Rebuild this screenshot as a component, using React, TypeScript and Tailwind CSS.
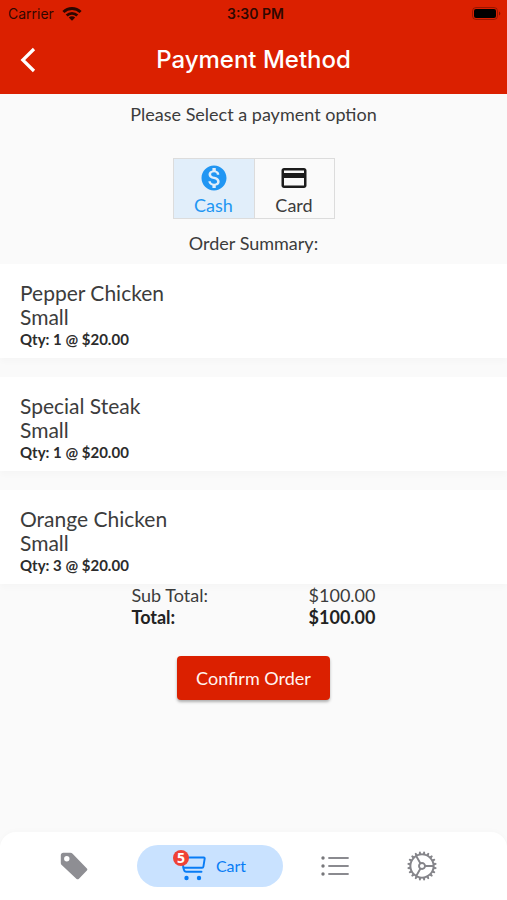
import { useState } from "react";
import { MdMonetizationOn, MdOutlineCreditCard } from "react-icons/md";

const orders = [
  { name: "Pepper Chicken", size: "Small", qty: 1, price: "$20.00" },
  { name: "Special Steak", size: "Small", qty: 1, price: "$20.00" },
  { name: "Orange Chicken", size: "Small", qty: 3, price: "$20.00" },
];

function WifiIcon() {
  return (
    <svg width="20" height="14" viewBox="0 0 20 14" fill="none" stroke="currentColor" strokeWidth="2.9" aria-hidden="true">
      <path d="M1.400 5a12.300 12.300 0 0 1 17.200 0" />
      <path d="M4.700 8.500a7.600 7.600 0 0 1 10.600 0" />
      <path d="M10 13.800 6.800 10.600a4.500 4.500 0 0 1 6.400 0Z" fill="currentColor" stroke="none" />
    </svg>
  );
}

function BatteryIcon() {
  return (
    <svg width="31" height="14" viewBox="0 0 31 14" aria-hidden="true">
      <rect x="0.500" y="0.500" width="25" height="12" rx="3.500" fill="none" stroke="#000" strokeOpacity="0.3" />
      <rect x="2" y="2" width="22" height="9" rx="2" fill="#000" />
      <path d="M27 4.500v4c1.800-.7 1.800-3.300 0-4Z" fill="#000" fillOpacity="0.4" />
    </svg>
  );
}

function TagIcon() {
  return (
    <svg width="28" height="28" viewBox="0 0 28 28" fill="#8e8e93" aria-hidden="true">
      <path
        fillRule="evenodd"
        d="M3.300.800h7c1 0 1.700.300 2.300.900l14.300 14.800c.6.600.6 1.300 0 1.900l-8.200 8.500c-.6.600-1.500.6-2.100 0L1.700 13c-.6-.6-.9-1.300-.9-2.100V3.300c0-1.500 1-2.500 2.500-2.500ZM6.800 4a2.700 2.700 0 1 0 0 5.400 2.700 2.700 0 0 0 0-5.400Z"
      />
    </svg>
  );
}

function CartIcon() {
  return (
    <svg width="32" height="30" viewBox="0 0 32 30" fill="none" stroke="#087cf5" strokeWidth="1.900" strokeLinecap="round" strokeLinejoin="round" aria-hidden="true">
      <path d="M2 2.500h3.200c.8 0 1.300.4 1.500 1.200l3.200 15.100c.3 1.300.8 1.900 2 1.900H27.500" />
      <path d="M7.500 6.500h22.300c.7 0 1 .4.900 1l-1.300 8.200c-.1.700-.6 1.100-1.300 1.100H9.500" />
      <circle cx="12.500" cy="27" r="2.200" fill="#087cf5" stroke="none" />
      <circle cx="25" cy="27" r="2.200" fill="#087cf5" stroke="none" />
    </svg>
  );
}

function ListIcon() {
  return (
    <svg width="28" height="22" viewBox="0 0 28 22" fill="none" stroke="#8a8a8f" strokeWidth="1.800" strokeLinecap="round" aria-hidden="true">
      <path d="M8 3h19M8 11h19M8 19h19" />
      <g fill="#77777b" stroke="none">
        <circle cx="2" cy="3" r="1.700" />
        <circle cx="2" cy="11" r="1.700" />
        <circle cx="2" cy="19" r="1.700" />
      </g>
    </svg>
  );
}

const teeth = Array.from({ length: 20 }, (_, i) => i * 18 + 9);

function GearIcon() {
  return (
    <svg width="30" height="30" viewBox="-15 -15 30 30" fill="none" stroke="#85858a" strokeWidth="1.900" aria-hidden="true">
      <circle r="11.600" />
      <circle r="3" />
      <path d="M3 0H11.600M-1.500 2.600-5.800 10M-1.500-2.600-5.800-10" />
      {teeth.map((angle) => (
        <path key={angle} d="M12-1.400 14.600-.7V.7L12 1.400Z" fill="#85858a" stroke="none" transform={`rotate(${angle})`} />
      ))}
    </svg>
  );
}

export default function App() {
  const [method, setMethod] = useState("cash");
  const option = "flex h-[59px] flex-col items-center justify-end pb-px text-lg leading-6";
  return (
    <div className="flex min-h-screen flex-col bg-[#fafafa] font-['Lato','Noto_Sans',sans-serif] text-[#3c3c3c]">
      <header className="bg-[#db2000] font-['Inter','Liberation_Sans',sans-serif]">
        <div className="grid h-7 grid-cols-3 items-center pr-1 pl-2 text-sm text-black/80">
          <div className="flex items-center gap-2">
            <span>Carrier</span>
            <WifiIcon />
          </div>
          <span className="text-center font-semibold">3:30 PM</span>
          <span className="flex justify-end">
            <BatteryIcon />
          </span>
        </div>
        <div className="grid h-[66px] grid-cols-[56px_1fr_56px] items-center pb-0.5">
          <button type="button" aria-label="Back" className="flex h-full items-center pl-5 text-white">
            <svg width="16" height="26" viewBox="0 0 16 26" fill="none" stroke="currentColor" strokeWidth="3.200" aria-hidden="true">
              <path d="M14 2 2.800 13 14 24" />
            </svg>
          </button>
          <h1 className="text-center text-2xl font-medium text-white">Payment Method</h1>
        </div>
      </header>

      <main className="flex flex-1 flex-col items-center">
        <p className="mt-2 text-lg leading-6">Please Select a payment option</p>

        <div className="mt-8 flex border border-[#dcdcdc]" role="group" aria-label="Payment option">
          <button
            type="button"
            aria-pressed={method === "cash"}
            onClick={() => setMethod("cash")}
            className={`${option} w-[81px] border-r border-[#dcdcdc] ${method === "cash" ? "bg-[#e1eefa] text-[#2196f3]" : "text-[#3c3c3c]"}`}
          >
            <MdMonetizationOn size={30} />
            <span>Cash</span>
          </button>
          <button
            type="button"
            aria-pressed={method === "card"}
            onClick={() => setMethod("card")}
            className={`${option} w-[79px] ${method === "card" ? "bg-[#e1eefa] text-[#2196f3]" : "text-[#3c3c3c]"}`}
          >
            <MdOutlineCreditCard size={30} className={method === "card" ? "" : "text-[#1c1c1c]"} />
            <span>Card</span>
          </button>
        </div>

        <h2 className="mt-3 text-lg leading-6">Order Summary:</h2>

        <ul className="mt-[9px] flex w-full flex-col gap-[19px]">
          {orders.map((o) => (
            <li key={o.name} className="bg-white px-5 pt-[17px] pb-[9px] shadow-[0_4px_6px_rgba(0,0,0,0.02)]">
              <p className="text-[21px] leading-6">{o.name}</p>
              <p className="text-[21px] leading-6">{o.size}</p>
              <p className="text-[15px] leading-5 font-bold text-[#2c2c2c]">
                Qty: {o.qty} @ {o.price}
              </p>
            </li>
          ))}
        </ul>

        <dl className="grid w-[244px] grid-cols-[1fr_auto] text-lg leading-[22px]">
          <dt>Sub Total:</dt>
          <dd>$100.00</dd>
          <dt className="font-bold text-[#222222]">Total:</dt>
          <dd className="font-bold text-[#222222]">$100.00</dd>
        </dl>

        <button type="button" className="mt-7 mb-8 h-11 rounded bg-[#db2000] px-[19px] text-lg text-[#fff4f0] shadow-[0_2px_3px_rgba(0,0,0,0.3)]">
          Confirm Order
        </button>
      </main>

      <nav aria-label="Main" className="flex h-[68px] items-center rounded-t-2xl bg-white pr-[42px] pl-[30px] shadow-[0_-1px_6px_rgba(0,0,0,0.02)]">
        <button type="button" aria-label="Deals" className="flex flex-1 justify-center">
          <TagIcon />
        </button>
        <button
          type="button"
          aria-current="page"
          className="mr-2 ml-5 flex h-[42px] w-[146px] items-center justify-center gap-[10px] rounded-full bg-[#c9e2ff] text-base text-[#087cf5]"
        >
          <span className="relative">
            <CartIcon />
            <span className="absolute -top-px -left-px flex size-4 items-center justify-center rounded-full bg-[#ef4136] font-['Open_Sans',sans-serif] text-sm leading-4 font-bold text-white">
              5
            </span>
          </span>
          Cart
        </button>
        <button type="button" aria-label="Orders" className="flex flex-1 justify-center">
          <ListIcon />
        </button>
        <button type="button" aria-label="Settings" className="flex flex-1 justify-center">
          <GearIcon />
        </button>
      </nav>
    </div>
  );
}
